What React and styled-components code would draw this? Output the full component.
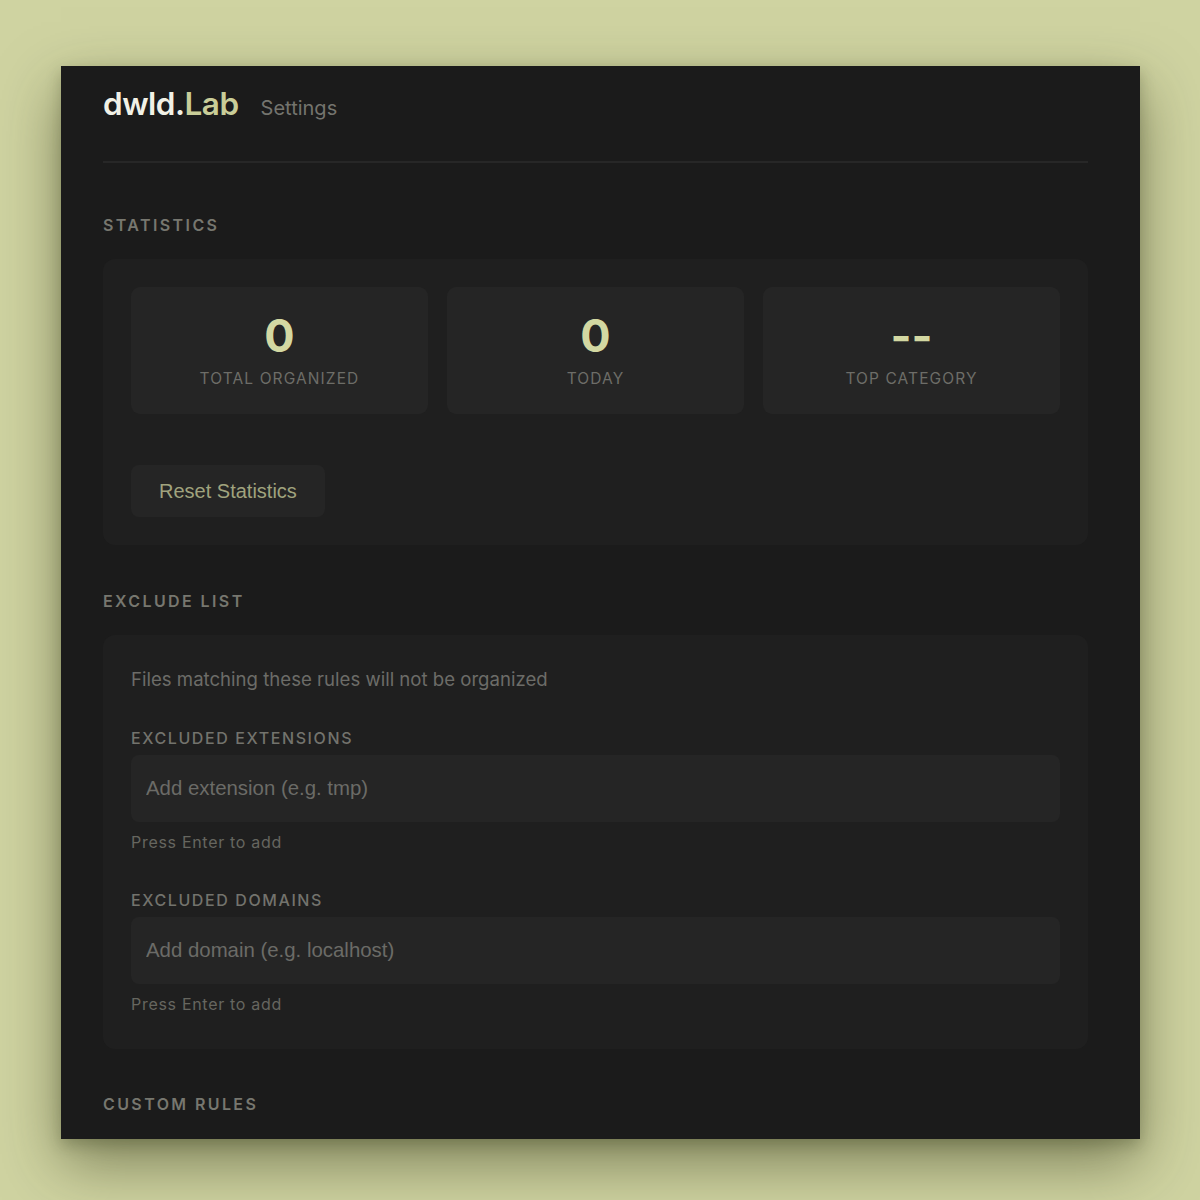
import React from "react";
import styled, { createGlobalStyle } from "styled-components";

const Global = createGlobalStyle`
  html, body { margin: 0; padding: 0; background: #cfd3a1; }
  body { font-family: Inter, "Noto Sans", sans-serif; }
  * { box-sizing: border-box; }
`;

const Stage = styled.div`
  padding: 66px 60px 61px 61px;
  height: 1200px;
`;

const Panel = styled.div`
  height: 1073px;
  background: #1b1b1b;
  overflow: hidden;
  padding: 0 52px 0 42px;
  box-shadow: 0 24px 56px rgba(45, 50, 20, 0.5), 0 6px 14px rgba(45, 50, 20, 0.25);
`;

const Header = styled.header`
  display: flex;
  align-items: baseline;
  gap: 22px;
  padding: 18px 0 38px;
  border-bottom: 2px solid #272727;
`;

const Logo = styled.div`
  font-size: 31.5px;
  font-weight: 600;
  letter-spacing: -0.5px;
  color: #f1f1e6;
  span { color: #c9cd98; }
`;

const Subtitle = styled.div`
  font-size: 20px;
  color: #74746e;
`;

const Section = styled.section`
  margin-top: ${(p) => p.$top}px;
`;

const SectionTitle = styled.h2`
  margin: 0 0 24px;
  font-size: 16px;
  font-weight: 600;
  letter-spacing: 2.4px;
  color: #77776f;
  text-transform: uppercase;
`;

const Card = styled.div`
  background: #1f1f1f;
  border-radius: 12px;
  padding: 28px 28px ${(p) => p.$bottom}px;
`;

const StatGrid = styled.div`
  display: grid;
  grid-template-columns: repeat(3, 1fr);
  gap: 19px;
`;

const StatCard = styled.div`
  background: #252525;
  border-radius: 9px;
  height: 127px;
  display: flex;
  flex-direction: column;
  align-items: center;
  padding-top: 23px;
`;

const StatValue = styled.div`
  font-size: 45px;
  font-weight: 700;
  line-height: 52px;
  color: #d3d8a2;
`;

const StatLabel = styled.div`
  margin-top: 7px;
  font-size: 15.5px;
  letter-spacing: 1.1px;
  color: #6d6d68;
  text-transform: uppercase;
`;

const Button = styled.button`
  margin-top: 51px;
  height: 52px;
  padding: 0 28px;
  border: none;
  border-radius: 8px;
  background: #252525;
  color: #a0a37e;
  font-family: "Liberation Sans", Arial, sans-serif;
  font-size: 20px;
`;

const Description = styled.p`
  margin: 4px 0 0;
  font-size: 18.6px;
  color: #6c6c68;
  line-height: 24px;
`;

const FieldLabel = styled.div`
  margin-top: ${(p) => p.$top}px;
  font-size: 16px;
  font-weight: 500;
  letter-spacing: 1.6px;
  color: #73736d;
  text-transform: uppercase;
  line-height: 20px;
`;

const Input = styled.input`
  display: block;
  width: 100%;
  height: 67px;
  margin-top: 7px;
  border: none;
  outline: none;
  border-radius: 8px;
  background: #252525;
  padding: 0 15px;
  font-family: "Liberation Sans", Arial, sans-serif;
  font-size: 20.4px;
  color: #ddd;
  &::placeholder { color: #6b6b67; }
`;

const Hint = styled.div`
  margin-top: 10px;
  font-size: 16px;
  letter-spacing: 0.7px;
  color: #66665f;
  line-height: 20px;
`;

const stats = [
  { value: "0", label: "Total Organized" },
  { value: "0", label: "Today" },
  { value: "--", label: "Top Category" },
];

export default function App() {
  return (
    <Stage>
      <Global />
      <Panel>
        <Header>
          <Logo>
            dwld.<span>Lab</span>
          </Logo>
          <Subtitle>Settings</Subtitle>
        </Header>

        <Section $top={52}>
          <SectionTitle>Statistics</SectionTitle>
          <Card $bottom={28}>
            <StatGrid>
              {stats.map((s) => (
                <StatCard key={s.label}>
                  <StatValue>{s.value}</StatValue>
                  <StatLabel>{s.label}</StatLabel>
                </StatCard>
              ))}
            </StatGrid>
            <Button>Reset Statistics</Button>
          </Card>
        </Section>

        <Section $top={46}>
          <SectionTitle>Exclude List</SectionTitle>
          <Card $bottom={35}>
            <Description>Files matching these rules will not be organized</Description>
            <FieldLabel $top={37}>Excluded Extensions</FieldLabel>
            <Input placeholder="Add extension (e.g. tmp)" />
            <Hint>Press Enter to add</Hint>
            <FieldLabel $top={38}>Excluded Domains</FieldLabel>
            <Input placeholder="Add domain (e.g. localhost)" />
            <Hint>Press Enter to add</Hint>
          </Card>
        </Section>

        <Section $top={45}>
          <SectionTitle>Custom Rules</SectionTitle>
        </Section>
      </Panel>
    </Stage>
  );
}
